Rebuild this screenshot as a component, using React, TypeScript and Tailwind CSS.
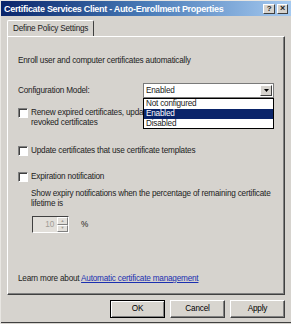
function Checkbox() {
  return (
    <span className="block h-[10px] w-[10px] shrink-0 border border-t-[#808080] border-l-[#808080] border-r-white border-b-white bg-white shadow-[inset_1px_1px_0_#404040]" />
  );
}

function Button({ label, isDefault }: { label: string; isDefault?: boolean }) {
  return (
    <div
      className={
        "flex h-[18px] w-[55px] items-center justify-center bg-[#d8d5cf] text-black " +
        (isDefault
          ? "border border-black shadow-[inset_1px_1px_0_#fff,inset_-1px_-1px_0_#808080]"
          : "border border-t-white border-l-white border-r-[#404040] border-b-[#404040] shadow-[inset_-1px_-1px_0_#808080]")
      }
    >
      {label}
    </div>
  );
}

export default function App() {
  return (
    <div
      className="flex h-[324px] w-[291px] flex-col overflow-hidden border-l border-t border-l-[#e8e6e2] border-t-[#e8e6e2] bg-[#d6d3ce] text-[8.2px] leading-[10px] tracking-[-0.2px] text-[#222]"
      style={{ fontFamily: '"Liberation Sans", Arial, sans-serif' }}
    >
      {/* title bar */}
      <div className="flex h-[15px] shrink-0 items-center justify-between bg-gradient-to-r from-[#0a246a] via-[#4a7cb8] to-[#a6caf0] pl-[3px] pr-[3px]">
        <span className="whitespace-nowrap text-[9px] font-bold tracking-[-0.3px] text-white">
          Certificate Services Client - Auto-Enrollment Properties
        </span>
        <div className="flex gap-[2px]">
          <div className="flex h-[10px] w-[12px] items-center justify-center border border-t-white border-l-white border-r-[#404040] border-b-[#404040] bg-[#d6d3ce] text-[8px] font-bold leading-none">
            ?
          </div>
          <div className="flex h-[10px] w-[11px] items-center justify-center border border-t-white border-l-white border-r-[#404040] border-b-[#404040] bg-[#d6d3ce] text-[9px] font-bold leading-none">
            ×
          </div>
        </div>
      </div>

      {/* tabs */}
      <div className="mt-[4px] flex px-[6px]">
        <div className="flex h-[16px] items-center rounded-t-[2px] border border-b-0 border-l-white border-t-white border-r-[#404040] bg-[#d6d3ce] px-[5px]">
          Define Policy Settings
        </div>
      </div>

      {/* panel */}
      <div className="mx-[6px] flex h-[259px] flex-col border border-l-white border-t-white border-r-[#404040] border-b-[#404040] px-[10px] pt-[19px] shadow-[inset_-1px_-1px_0_#808080]">
        <div>Enroll user and computer certificates automatically</div>

        <div className="relative mt-[17px] flex items-center justify-between">
          <span>Configuration Model:</span>
          <div className="flex h-[15px] w-[131px] items-center justify-between border border-[#7a7a7a] bg-white pl-[2px] pr-[1px]">
            <span>Enabled</span>
            <div className="flex h-[11px] w-[12px] items-center justify-center border border-t-white border-l-white border-r-[#404040] border-b-[#404040] bg-[#d6d3ce]">
              <svg width="5" height="3" viewBox="0 0 5 3">
                <path d="M0 0h5L2.5 3z" fill="#000" />
              </svg>
            </div>
          </div>
          <div className="absolute right-0 top-[15px] z-10 flex w-[131px] flex-col border border-black bg-white">
            <span className="h-[10px] pl-[2px]">Not configured</span>
            <span className="h-[10px] bg-[#0a246a] pl-[2px] text-white">Enabled</span>
            <span className="h-[9px] pl-[2px]">Disabled</span>
          </div>
        </div>

        <div className="mt-[10px] flex gap-[3px]">
          <Checkbox />
          <div className="w-[116px] overflow-hidden whitespace-nowrap">
            <div>Renew expired certificates, update pending certificates</div>
            <div>revoked certificates</div>
          </div>
        </div>

        <div className="mt-[18px] flex items-center gap-[3px]">
          <Checkbox />
          <span>Update certificates that use certificate templates</span>
        </div>

        <div className="mt-[16px] flex items-center gap-[3px]">
          <Checkbox />
          <span>Expiration notification</span>
        </div>

        <div className="mt-[7px] whitespace-nowrap pl-[13px]">
          <div>Show expiry notifications when the percentage of remaining certificate</div>
          <div>lifetime is</div>
        </div>

        <div className="mt-[7px] flex items-center gap-[12px] pl-[14px]">
          <div className="flex h-[17px] w-[37px] items-center border border-t-[#404040] border-l-[#404040] border-r-white border-b-white bg-[#e2dfda]">
            <span className="flex-1 pr-[3px] text-right text-[#a09c96]">10</span>
            <div className="flex h-full w-[11px] flex-col">
              <div className="flex flex-1 items-center justify-center border border-t-white border-l-white border-r-[#808080] border-b-[#808080] text-[4px] leading-none text-[#a09c96]">
                ▲
              </div>
              <div className="flex flex-1 items-center justify-center border border-t-white border-l-white border-r-[#808080] border-b-[#808080] text-[4px] leading-none text-[#a09c96]">
                ▼
              </div>
            </div>
          </div>
          <span>%</span>
        </div>

        <div className="mt-auto mb-[10px]">
          Learn more about{" "}
          <span className="text-[#1a2fb0] underline">Automatic certificate management</span>
        </div>
      </div>

      {/* buttons */}
      <div className="mt-[5px] flex justify-end gap-[5px] pr-[6px]">
        <Button label="OK" isDefault />
        <Button label="Cancel" />
        <Button label="Apply" />
      </div>

      <div className="mt-[4px] h-[1px] bg-[#404040]" />
    </div>
  );
}
